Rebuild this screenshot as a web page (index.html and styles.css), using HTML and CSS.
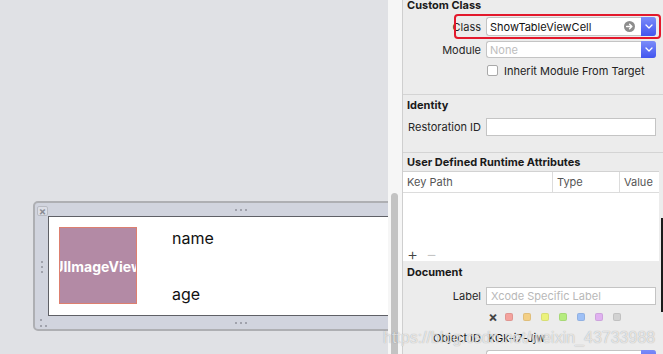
FILE: index.html
```html
<!DOCTYPE html>
<html lang="en">
<head>
  <meta charset="UTF-8">
  <title>Custom Class Inspector</title>
  <link rel="stylesheet" href="styles.css">
</head>
<body>
  <main class="canvas">
    <div class="cell">
      <div class="cell-bar">
        <span class="close-box">&#215;</span>
        <span class="grip-h"><i></i><i></i><i></i></span>
      </div>
      <div class="cell-middle">
        <div class="cell-side"><span class="grip-v"><i></i><i></i><i></i></span></div>
        <div class="cell-content">
          <div class="image-view"><span>UIImageView</span></div>
          <div class="cell-labels">
            <span>name</span>
            <span>age</span>
          </div>
        </div>
      </div>
      <div class="cell-bar">
        <span class="corner-grip"><i></i><i></i><i></i></span>
        <span class="grip-h"><i></i><i></i><i></i></span>
      </div>
    </div>
  </main>

  <div class="gutter"><div class="thumb"></div></div>

  <aside class="inspector">
    <section class="group group-class">
      <h2>Custom Class</h2>
      <div class="row row-class">
        <label>Class</label>
        <div class="combo">
          <span class="combo-text">ShowTableViewCell</span>
          <span class="goto">
            <svg width="11" height="11" viewBox="0 0 11 11"><circle cx="5.5" cy="5.5" r="5.5" fill="#8d8d8d"/><path d="M2.6 5.5h5.2M5.6 3.2l2.3 2.3-2.3 2.3" stroke="#fff" stroke-width="1.4" fill="none" stroke-linecap="round" stroke-linejoin="round"/></svg>
          </span>
          <span class="popup-btn"><svg width="8" height="5" viewBox="0 0 8 5"><path d="M1 1l3 3 3-3" stroke="#fff" stroke-width="1.3" fill="none" stroke-linecap="round" stroke-linejoin="round"/></svg></span>
        </div>
      </div>
      <div class="row row-module">
        <label>Module</label>
        <div class="combo combo-small">
          <span class="combo-text placeholder">None</span>
          <span class="popup-btn"><svg width="8" height="5" viewBox="0 0 8 5"><path d="M1 1l3 3 3-3" stroke="#fff" stroke-width="1.3" fill="none" stroke-linecap="round" stroke-linejoin="round"/></svg></span>
        </div>
      </div>
      <div class="check-row">
        <span class="checkbox"></span>
        <span>Inherit Module From Target</span>
      </div>
    </section>

    <section class="group group-identity">
      <h2>Identity</h2>
      <div class="row row-field">
        <label>Restoration ID</label>
        <div class="field"></div>
      </div>
    </section>

    <section class="group-attrs">
      <h2>User Defined Runtime Attributes</h2>
      <div class="attr-table">
        <div class="attr-head">
          <span class="col-key">Key Path</span>
          <span class="col-type">Type</span>
          <span class="col-value">Value</span>
        </div>
        <div class="attr-body">
          <div class="attr-tools"><span class="plus">+</span><span class="minus">&#8722;</span></div>
        </div>
      </div>
    </section>

    <section class="group-document">
      <h2>Document</h2>
      <div class="row row-field">
        <label>Label</label>
        <div class="field"><span class="placeholder">Xcode Specific Label</span></div>
      </div>
      <div class="swatches">
        <span class="swatch-clear">&#215;</span>
        <span class="swatch red"></span>
        <span class="swatch orange"></span>
        <span class="swatch yellow"></span>
        <span class="swatch green"></span>
        <span class="swatch blue"></span>
        <span class="swatch purple"></span>
        <span class="swatch gray"></span>
      </div>
      <div class="row row-object">
        <label>Object ID</label>
        <span class="object-id">KGk-i7-Jjw</span>
      </div>
      <div class="row row-last">
        <label></label>
        <div class="combo">
          <span class="combo-text"></span>
          <span class="popup-btn"></span>
        </div>
      </div>
    </section>
  </aside>

  <div class="edge-peek"></div>
  <div class="watermark">https://blog.csdn.net/weixin_43733988</div>
</body>
</html>
```

FILE: styles.css
```css
* {
  box-sizing: border-box;
}

html,
body {
  margin: 0;
}

body {
  position: relative;
  display: flex;
  width: 663px;
  height: 354px;
  overflow: hidden;
  font-family: Inter, "Liberation Sans", sans-serif;
  font-size: 11px;
  color: #222;
  background-color: #ececec;
}

/* canvas with the prototype cell */

.canvas {
  flex: none;
  width: 388px;
  padding: 201px 0 0 33px;
  overflow: hidden;
  background-color: #e0e1e5;
}

.cell {
  width: 416px;
  border: 2px solid #aeafb3;
  border-radius: 5px;
  background-color: #d1d4de;
}

.cell-bar {
  display: grid;
  grid-template-columns: 1fr auto 1fr;
  align-items: center;
  height: 13px;
}

.close-box {
  justify-self: start;
  width: 11px;
  height: 10px;
  margin: 3px 0 0 2px;
  border: 1px solid #b9bbc3;
  border-radius: 2px;
  background-color: #dcdee6;
  color: #8b8d94;
  font-size: 11px;
  font-weight: 700;
  line-height: 8px;
  text-align: center;
}

.grip-h {
  display: flex;
  gap: 3px;
}

.grip-h i,
.grip-v i,
.corner-grip i {
  display: block;
  width: 2px;
  height: 2px;
  border-radius: 1px;
  background-color: #8f929b;
}

.corner-grip {
  justify-self: start;
  display: grid;
  grid-template-columns: 2px 2px;
  column-gap: 3px;
  row-gap: 4px;
  margin-left: 5px;
}

.corner-grip i:first-child {
  grid-column: 1 / 3;
}

.cell-middle {
  display: flex;
  height: 100px;
}

.cell-side {
  display: flex;
  align-items: center;
  justify-content: center;
  width: 13px;
  flex: none;
}

.grip-v {
  display: flex;
  flex-direction: column;
  gap: 3px;
  margin-top: 2px;
}

.cell-content {
  display: flex;
  flex: 1;
  background-color: #fff;
  border-top: 1px solid #5f6066;
  border-bottom: 1px solid #5f6066;
  border-left: 1px solid #5f6066;
}

.image-view {
  display: flex;
  align-items: center;
  justify-content: center;
  width: 78px;
  height: 77px;
  margin: 10px 0 0 10px;
  overflow: hidden;
  background-color: #b38aa5;
  border: 1px solid #dd7f6f;
}

.image-view span {
  color: #fff;
  font-size: 14px;
  font-weight: 700;
  white-space: nowrap;
  margin-top: 1px;
}

.cell-labels {
  display: flex;
  flex-direction: column;
  gap: 36px;
  padding: 11px 0 0 35px;
  font-size: 16px;
  line-height: 20px;
  color: #111;
}

.gutter {
  flex: none;
  width: 14px;
  background-color: #f6f6f6;
}

.thumb {
  width: 7px;
  height: 200px;
  margin: 193px 0 0 3px;
  border-radius: 4px;
  background-color: #c3c3c3;
}

/* inspector */

.inspector {
  display: flex;
  flex-direction: column;
  flex: 1;
  border-left: 1px solid #cfcfcf;
  background-color: #ececec;
}

.inspector h2 {
  margin: 0;
  padding-left: 4px;
  font-size: 11px;
  font-weight: 700;
  line-height: 14px;
  color: #1a1a1a;
}

.group {
  border-bottom: 1px solid #d4d4d4;
  padding-right: 7px;
}

.row {
  display: flex;
  align-items: center;
  gap: 5px;
}

.row > label {
  flex: none;
  width: 78px;
  text-align: right;
  color: #262626;
}

.placeholder {
  color: #b8b8b8;
}

.combo {
  position: relative;
  display: flex;
  align-items: center;
  flex: 1;
  height: 19px;
  background-color: #fff;
  border: 1px solid #c4c4c4;
  border-right: none;
  border-radius: 3px;
}

.combo-small {
  height: 17px;
}

.combo-text {
  flex: 1;
  padding-left: 3px;
  color: #111;
}

.combo-text.placeholder {
  color: #bdbdbd;
}

.goto {
  display: flex;
  margin-right: 6px;
}

.popup-btn {
  display: flex;
  align-items: center;
  justify-content: center;
  align-self: stretch;
  width: 15px;
  margin: -1px 0;
  border-radius: 0 3px 3px 0;
  background: linear-gradient(#7b8cf9, #4255ef);
}

.group-class h2 {
  margin-top: -2px;
}

.row-class {
  position: relative;
  margin-top: 5px;
}

/* red annotation drawn over the class row */
.row-class::after {
  content: "";
  position: absolute;
  left: 51px;
  right: -5px;
  top: -3px;
  bottom: -3px;
  border: 2px solid #e3192c;
  border-radius: 4px;
}

.row-module {
  margin-top: 5px;
}

.check-row {
  display: flex;
  align-items: center;
  gap: 6px;
  margin: 7px 0 0 84px;
  height: 11px;
}

.group-class {
  padding-bottom: 18px;
}

.checkbox {
  width: 11px;
  height: 11px;
  background-color: #fff;
  border: 1px solid #a9a9a9;
  border-radius: 2px;
}

.group-identity {
  padding-top: 3px;
  padding-bottom: 16px;
}

.row-field {
  margin-top: 6px;
}

.field {
  display: flex;
  align-items: center;
  flex: 1;
  height: 18px;
  padding-left: 4px;
  background-color: #fff;
  border: 1px solid #c4c4c4;
}

.group-attrs h2 {
  margin-top: 2px;
}

.attr-table {
  margin: 2px 4px 0 0;
  background-color: #fff;
  border-top: 1px solid #d2d2d2;
}

.attr-head {
  display: flex;
  height: 21px;
  border-bottom: 1px solid #dcdcdc;
  color: #555;
  line-height: 20px;
}

.attr-head span {
  padding-left: 4px;
}

.col-key {
  width: 149px;
}

.col-type {
  width: 67px;
  border-left: 1px solid #dcdcdc;
}

.col-value {
  flex: 1;
  border-left: 1px solid #dcdcdc;
}

.attr-body {
  display: flex;
  flex-direction: column;
  justify-content: flex-end;
  height: 68px;
}

.attr-tools {
  display: flex;
  gap: 8px;
  height: 14px;
  padding-left: 4px;
  font-size: 17px;
  line-height: 14px;
  font-weight: 300;
}

.attr-tools .plus {
  color: #444;
}

.attr-tools .minus {
  color: #c4c4c4;
}

.group-document {
  padding-right: 7px;
}

.group-document h2 {
  margin-top: 4px;
}

.group-document .row-field {
  margin-top: 8px;
}

.swatches {
  display: flex;
  align-items: center;
  gap: 10px;
  height: 8px;
  margin: 8px 0 0 83px;
}

.swatch-clear {
  width: 14px;
  margin-right: -5px;
  text-align: center;
  font-size: 14px;
  font-weight: 700;
  color: #444;
  line-height: 8px;
}

.swatch {
  width: 8px;
  height: 8px;
  border-radius: 2px;
  border: 1px solid rgba(0, 0, 0, 0.08);
}

.swatch.red { background-color: #f4a29d; }
.swatch.orange { background-color: #f3cf85; }
.swatch.yellow { background-color: #ebf27d; }
.swatch.green { background-color: #b6ec7f; }
.swatch.blue { background-color: #9ec0f6; }
.swatch.purple { background-color: #e0b1f0; }
.swatch.gray { background-color: #d2d2d2; }

.row-object {
  height: 14px;
  margin-top: 10px;
}

.object-id {
  padding-left: 2px;
  color: #111;
}

.row-last {
  margin-top: 5px;
}

.edge-peek {
  position: absolute;
  right: 0;
  top: 218px;
  width: 2px;
  height: 94px;
  background-color: #1c1c1c;
}

.watermark {
  position: absolute;
  left: 383px;
  top: 329px;
  font-family: "Liberation Sans", sans-serif;
  font-size: 16px;
  line-height: 18px;
  color: rgba(255, 255, 255, 0.7);
  text-shadow: 0 0 1px rgba(0, 0, 0, 0.35);
  white-space: nowrap;
}
```
